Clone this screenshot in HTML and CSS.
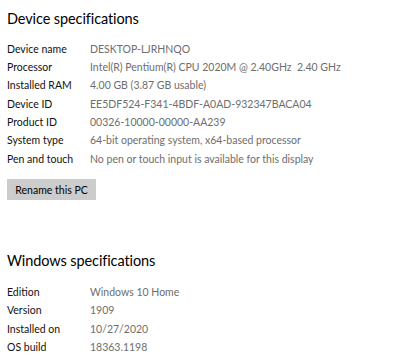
FILE: index.html
```html
<!DOCTYPE html>
<html>
<head>
<meta charset="utf-8">
<link rel="stylesheet" href="styles.css">
</head>
<body>
<section class="sec">
  <h2 class="title">Device specifications</h2>
  <div class="grid">
    <div class="k">Device name</div><div class="v">DESKTOP-LJRHNQO</div>
    <div class="k">Processor</div><div class="v">Intel(R) Pentium(R) CPU 2020M @ 2.40GHz&nbsp;&nbsp;2.40 GHz</div>
    <div class="k">Installed RAM</div><div class="v">4.00 GB (3.87 GB usable)</div>
    <div class="k">Device ID</div><div class="v">EE5DF524-F341-4BDF-A0AD-932347BACA04</div>
    <div class="k">Product ID</div><div class="v">00326-10000-00000-AA239</div>
    <div class="k">System type</div><div class="v">64-bit operating system, x64-based processor</div>
    <div class="k">Pen and touch</div><div class="v">No pen or touch input is available for this display</div>
  </div>
  <button class="btn">Rename this PC</button>
</section>
<section class="sec sec2">
  <h2 class="title">Windows specifications</h2>
  <div class="grid">
    <div class="k">Edition</div><div class="v">Windows 10 Home</div>
    <div class="k">Version</div><div class="v">1909</div>
    <div class="k">Installed on</div><div class="v">10/27/2020</div>
    <div class="k">OS build</div><div class="v">18363.1198</div>
  </div>
</section>
</body>
</html>
```
FILE: styles.css
```css
html, body { margin: 0; padding: 0; background: #fff; }
body {
  font-family: Lato, "Open Sans", sans-serif;
  color: #000;
  padding: 0 0 0 7px;
  overflow: hidden;
}
.sec { display: flex; flex-direction: column; align-items: flex-start; }
.title {
  margin: 0;
  font-weight: 400;
  font-size: 14.5px;
  line-height: 26px;
  padding-top: 6px;
  letter-spacing: -0.1px;
}
.grid {
  display: grid;
  grid-template-columns: 83px auto;
  grid-auto-rows: 18.4px;
  margin-top: 7.5px;
  font-size: 10.5px;
  line-height: 18.4px;
  white-space: nowrap;
}
.k { color: #111; }
.v { color: #6e6e6e; }
.btn {
  margin-top: 11px;
  font-family: inherit;
  font-size: 10.5px;
  background: #cccccc;
  border: 0;
  padding: 0;
  width: 89px;
  height: 21px;
  color: #000;
}
.sec2 { margin-top: 41.5px; }
.sec2 .grid { margin-top: 9px; }
```
